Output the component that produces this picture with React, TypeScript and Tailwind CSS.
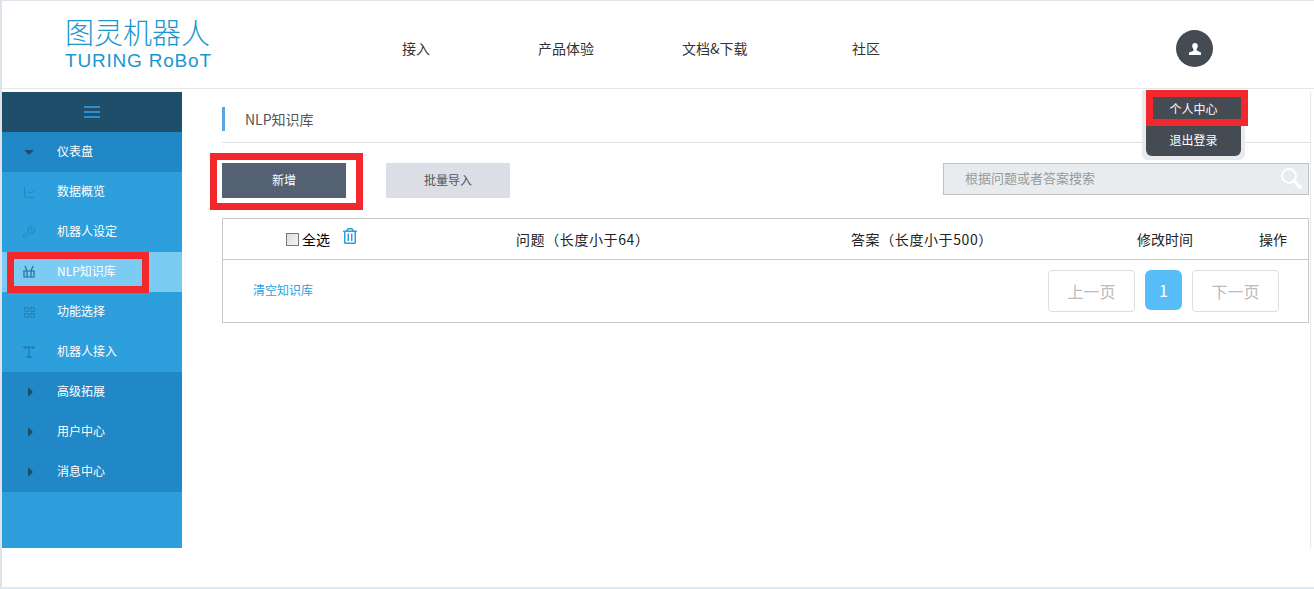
import { ChartLine, Wrench, LayoutGrid } from "lucide-react";
import { FaRegTrashAlt } from "react-icons/fa";
import type React from "react";

const font = "font-['Noto_Sans_CJK_SC','Liberation_Sans',sans-serif]";

const navLinks = [
  { label: "接入", width: "w-[136px]" },
  { label: "产品体验", width: "w-[144px]" },
  { label: "文档&下载", width: "w-[170px]" },
  { label: "社区", width: "w-[60px]" },
];

const Caret = ({ open }: { open?: boolean }) =>
  open ? (
    <span className="size-0 border-x-[5px] border-t-[5px] border-x-transparent border-t-[#1d4e6b]" />
  ) : (
    <span className="ml-[3px] size-0 border-y-[5px] border-l-[5px] border-y-transparent border-l-[#1d4e6b]" />
  );

const TowerIcon = () => (
  <svg viewBox="0 0 14 14" className="size-3.5" fill="none" stroke="currentColor" strokeWidth="1">
    <path d="M1 2h12M7 2v10M4 12h6M3 2v2M11 2v2" />
  </svg>
);

const BasketIcon = () => (
  <svg viewBox="0 0 14 14" className="size-3.5" fill="none" stroke="currentColor" strokeWidth="1.2">
    <path d="M1 6h12M2 6v6h10V6M5 6v6M9 6v6M3 1l2 5M11 1L9 6" />
  </svg>
);

const SideRow = (props: { icon: React.ReactNode; label: string; dark?: boolean; active?: boolean }) => {
  const { icon, label, dark, active } = props;
  const bg = active ? "bg-[#7ccbf2]" : dark ? "bg-[#2088c6]" : "bg-[#2c9fdc]";
  return (
    <div className={`flex h-10 items-center text-xs text-white ${bg}`}>
      <div className="flex w-[55px] justify-center pr-[1px] text-[#1f6f9f]">{icon}</div>
      <span className="pb-[2px]">{label}</span>
    </div>
  );
};

const Sidebar = () => (
  <aside className="flex h-[456px] w-[180px] shrink-0 flex-col bg-[#2c9fdc]">
    <div className="flex h-10 flex-col items-center justify-center gap-[3px] bg-[#1f4e6b]">
      <span className="h-[2px] w-4 bg-[#2c8fc9]" />
      <span className="h-[2px] w-4 bg-[#2c8fc9]" />
      <span className="h-[2px] w-4 bg-[#2c8fc9]" />
    </div>
    <SideRow dark icon={<Caret open />} label="仪表盘" />
    <SideRow icon={<ChartLine size={13} strokeWidth={1} />} label="数据概览" />
    <SideRow icon={<Wrench size={14} strokeWidth={1} />} label="机器人设定" />
    <SideRow active icon={<BasketIcon />} label="NLP知识库" />
    <SideRow icon={<LayoutGrid size={13} strokeWidth={1.2} />} label="功能选择" />
    <SideRow icon={<TowerIcon />} label="机器人接入" />
    <SideRow dark icon={<Caret />} label="高级拓展" />
    <SideRow dark icon={<Caret />} label="用户中心" />
    <SideRow dark icon={<Caret />} label="消息中心" />
  </aside>
);

const Header = () => (
  <header className="flex h-[88px] items-center border-b border-[#e4e6e8] bg-white">
    <div className="ml-[63px] flex w-[150px] flex-col gap-[6px] text-[#1a97cf]">
      <span className="text-[29px] leading-[26px] font-extralight">图灵机器人</span>
      <span className="font-['Liberation_Sans',sans-serif] text-[19px] leading-[22px] tracking-[0.8px] whitespace-nowrap">
        TURING RoBoT
      </span>
    </div>
    <nav className="mt-[6px] ml-[187px] flex text-sm text-[#333]">
      {navLinks.map((link) => (
        <span key={link.label} className={link.width}>
          {link.label}
        </span>
      ))}
    </nav>
    <div className="mt-[8px] ml-[264px] flex size-[37px] items-center justify-center rounded-full bg-[#454b52]">
      <svg viewBox="0 0 14 14" className="size-[14px]" fill="#fff">
        <path d="M7 1c1.8 0 2.8 1.3 2.8 3.1 0 1.3-.6 2.5-1.3 3.1v1.1L13 10.500V13H1v-2.500l4.500-1.700V7.200C4.800 6.600 4.200 5.400 4.200 4.100 4.200 2.300 5.200 1 7 1z" />
      </svg>
    </div>
  </header>
);

const Content = () => (
  <main className="mr-[3px] flex-1 border-r border-[#e6e8ea] pl-10">
    <div className="flex h-[51px] items-center border-b border-[#dfe1e3] pt-[4px]">
      <span className="h-6 w-[3px] bg-[#5aa5dc]" />
      <span className="ml-5 text-sm text-[#555]">NLP知识库</span>
    </div>
    <div className="mt-5 flex items-start justify-between">
      <div className="flex gap-10">
        <button className="h-[35px] w-[124px] bg-[#536173] pb-[2px] text-xs text-white">新增</button>
        <button className="h-[35px] w-[124px] bg-[#dbdfe5] pb-[2px] text-xs text-[#555]">批量导入</button>
      </div>
      <div className="mr-[1px] flex h-[32px] w-[366px] items-center justify-between border border-[#bfc3c6] bg-[#e9ecef] pr-[6px] pb-[2px] pl-[21px] text-[13px] text-[#999]">
        <span>根据问题或者答案搜索</span>
        <svg viewBox="0 0 22 22" className="size-[22px]" fill="none" stroke="#fff">
          <circle cx="9" cy="9" r="7" strokeWidth="1.800" />
          <path d="M14 14l6.500 6.500" strokeWidth="3.500" strokeLinecap="round" />
        </svg>
      </div>
    </div>
    <div className="mt-5 mr-[1px] border border-[#c9c9c9] bg-white">
      <div className="grid h-[41px] grid-cols-[293px_335px_286px_122px_1fr] items-center border-b border-[#c9c9c9] text-sm text-[#222]">
        <div className="flex items-center pl-[63px]">
          <span className="size-[13px] border border-[#777] bg-gradient-to-br from-[#ddd] to-[#f5f5f5]" />
          <span className="ml-[3px] text-black">全选</span>
          <FaRegTrashAlt size={16} className="mb-[6px] ml-[12px] text-[#2c9fdc]" />
        </div>
        <span className="tracking-[0.6px]">问题（长度小于64）</span>
        <span className="tracking-[0.6px]">答案（长度小于500）</span>
        <span>修改时间</span>
        <span>操作</span>
      </div>
      <div className="flex h-[62px] items-center justify-between pr-[29px] pl-[30px]">
        <span className="pb-[2px] text-xs text-[#2c9fdc]">清空知识库</span>
        <div className="flex items-start gap-[10px]">
          <span className="flex h-[42px] w-[87px] items-center justify-center rounded border border-[#ddd] text-base text-[#bbb]">上一页</span>
          <span className="flex h-[40px] w-[37px] items-center justify-center rounded-md bg-[#56bdf8] text-base text-white">1</span>
          <span className="flex h-[42px] w-[87px] items-center justify-center rounded border border-[#ddd] text-base text-[#bbb]">下一页</span>
        </div>
      </div>
    </div>
  </main>
);

export default function App() {
  return (
    <div className={`relative h-[589px] w-[1314px] overflow-hidden border-t border-l-2 border-[#dde3e8] border-b-2 border-b-[#dcebf5] bg-white ${font}`}>
      <Header />
      <div className="mt-[3px] flex">
        <Sidebar />
        <Content />
      </div>

      {/* user dropdown, lies over the page */}
      <div className="absolute top-[89px] left-[1140px] w-[103px] rounded-b-md bg-[#e8eaec] px-1 pb-1">
        <div className="flex h-[66px] flex-col rounded-b-md bg-[#454b52] pb-[1px] text-xs text-white">
          <span className="flex h-[35px] items-center justify-center pt-[3px]">个人中心</span>
          <span className="flex h-[31px] items-center justify-center">退出登录</span>
        </div>
      </div>

      {/* red annotation boxes drawn on the screenshot */}
      <div className="absolute top-[89px] left-[1144px] h-[36px] w-[102px] border-[7px] border-[#f2282d]" />
      <div className="absolute top-[152px] left-[208px] h-[57px] w-[153px] border-[7px] border-[#f2282d]" />
      <div className="absolute top-[251px] left-[5px] h-[41px] w-[142px] border-[7px] border-[#f2282d]" />
    </div>
  );
}
